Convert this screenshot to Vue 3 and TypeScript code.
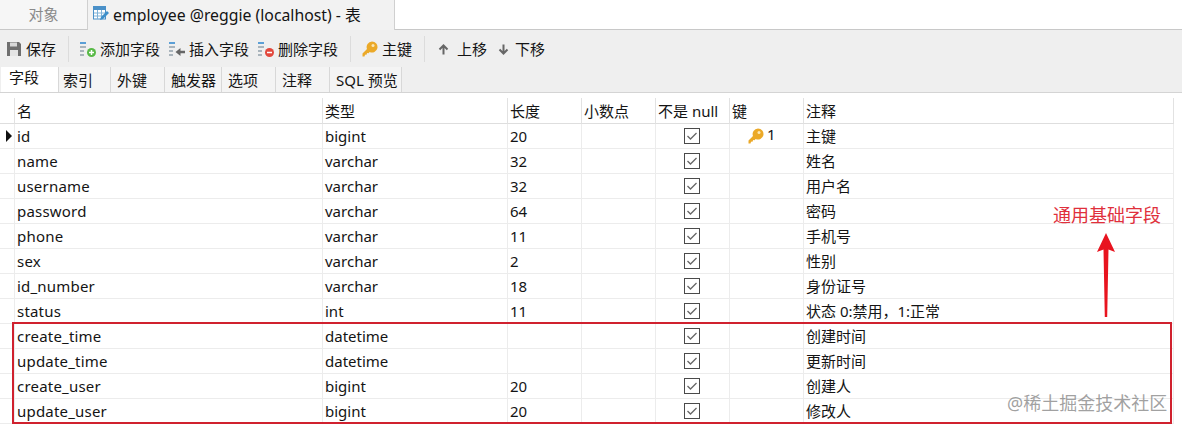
<script setup lang="ts">
interface Row { name: string; type: string; len: string; key?: string; note: string; first?: boolean }
const rows: Row[] = [
  { name: 'id', type: 'bigint', len: '20', key: '1', note: '主键', first: true },
  { name: 'name', type: 'varchar', len: '32', note: '姓名' },
  { name: 'username', type: 'varchar', len: '32', note: '用户名' },
  { name: 'password', type: 'varchar', len: '64', note: '密码' },
  { name: 'phone', type: 'varchar', len: '11', note: '手机号' },
  { name: 'sex', type: 'varchar', len: '2', note: '性别' },
  { name: 'id_number', type: 'varchar', len: '18', note: '身份证号' },
  { name: 'status', type: 'int', len: '11', note: '状态 0:禁用，1:正常' },
  { name: 'create_time', type: 'datetime', len: '', note: '创建时间' },
  { name: 'update_time', type: 'datetime', len: '', note: '更新时间' },
  { name: 'create_user', type: 'bigint', len: '20', note: '创建人' },
  { name: 'update_user', type: 'bigint', len: '20', note: '修改人' },
]
const subTabs = [
  { label: '字段', w: 58, pad: 8 }, { label: '索引', w: 52, pad: 4 }, { label: '外键', w: 54, pad: 6 },
  { label: '触发器', w: 57, pad: 6 }, { label: '选项', w: 54, pad: 6 }, { label: '注释', w: 54, pad: 6 },
  { label: 'SQL 预览', w: 72, pad: 6 },
]
const headers = ['名', '类型', '长度', '小数点', '不是 null', '键', '注释']
</script>

<template>
  <div class="page">
    <div class="tabbar">
      <div class="tab-object">对象</div>
      <div class="tab-active">
        <svg class="tab-icon" width="18" height="18" viewBox="0 0 18 18">
          <rect x="1" y="1" width="13" height="3.5" fill="#4a90c8" />
          <rect x="1.5" y="4.5" width="12" height="9.5" fill="#fff" stroke="#4a90c8" />
          <path d="M5.5 5v9M9.5 5v9M2 8h11M2 11h11" stroke="#7fb2d8" stroke-width="1" />
          <path d="M8 15l1-3 6-6 2 2-6 6z" fill="#3d8ec9" />
        </svg>
        <span>employee @reggie (localhost) - 表</span>
      </div>
      <div class="tab-rest"></div>
    </div>

    <div class="toolbar">
      <button class="tool tool-save">
        <svg width="16" height="16" viewBox="0 0 16 16">
          <path d="M1 1h12l2 2v12H1z" fill="#6f6f6f" />
          <rect x="4" y="1.5" width="7" height="4" fill="#d8d8d8" />
          <rect x="4" y="9" width="8" height="6" fill="#e4e4e4" />
        </svg>
        <span>保存</span>
      </button>
      <i class="sep sep-1"></i>
      <button class="tool tool-add">
        <svg width="17" height="17" viewBox="0 0 17 17">
          <path d="M0 2h6" stroke="#5b9fd6" stroke-width="2" />
          <path d="M0 6h6M0 10h4M0 14h4" stroke="#a9b4bc" stroke-width="2" />
          <circle cx="11.500" cy="11.500" r="4.500" fill="#58b947" />
          <path d="M9 11.500h5M11.500 9v5" stroke="#fff" stroke-width="1.500" />
        </svg>
        <span>添加字段</span>
      </button>
      <button class="tool tool-insert">
        <svg width="17" height="17" viewBox="0 0 17 17">
          <path d="M0 2h6" stroke="#5b9fd6" stroke-width="2" />
          <path d="M0 6h6M0 10h4M0 14h4" stroke="#a9b4bc" stroke-width="2" />
          <path d="M16 11h-6" stroke="#666" stroke-width="2.500" />
          <path d="M11.500 7l-5 4 5 4z" fill="#666" />
        </svg>
        <span>插入字段</span>
      </button>
      <button class="tool tool-delete">
        <svg width="17" height="17" viewBox="0 0 17 17">
          <path d="M0 2h6" stroke="#5b9fd6" stroke-width="2" />
          <path d="M0 6h6M0 10h4M0 14h4" stroke="#a9b4bc" stroke-width="2" />
          <circle cx="11.500" cy="11.500" r="4.500" fill="#e2483d" />
          <path d="M9 11.500h5" stroke="#fff" stroke-width="1.500" />
        </svg>
        <span>删除字段</span>
      </button>
      <i class="sep sep-2"></i>
      <button class="tool tool-key">
        <svg width="16" height="16" viewBox="0 0 16 16">
          <path d="M10 .5a5.500 5.500 0 1 1-2.300 10.500L6.500 12.200 5 12l-.2 1.500L3 13.800 2.500 15.500H.5v-3L5 8a5.500 5.500 0 0 1 5-7.500z" fill="#eba928" />
          <circle cx="11" cy="4.500" r="1.500" fill="#fbe7b5" />
        </svg>
        <span>主键</span>
      </button>
      <i class="sep sep-3"></i>
      <button class="tool tool-up">
        <svg width="11" height="11" viewBox="0 0 11 11">
          <path d="M5.500 10.500V3M1.500 5.500l4-4 4 4" fill="none" stroke="#666" stroke-width="2" />
        </svg>
        <span>上移</span>
      </button>
      <button class="tool tool-down">
        <svg width="11" height="11" viewBox="0 0 11 11">
          <path d="M5.500 .5V8M1.500 5.500l4 4 4-4" fill="none" stroke="#666" stroke-width="2" />
        </svg>
        <span>下移</span>
      </button>
    </div>

    <div class="subtabs">
      <div
        v-for="(t, i) in subTabs"
        :key="t.label"
        class="subtab"
        :class="{ on: i === 0 }"
        :style="{ width: t.w + 'px', paddingLeft: t.pad + 'px' }"
      >{{ t.label }}</div>
    </div>

    <div class="grid-wrap">
      <div class="row head">
        <div class="cell mark"></div>
        <div v-for="h in headers" :key="h" class="cell">{{ h }}</div>
      </div>
      <div v-for="r in rows" :key="r.name" class="row">
        <div class="cell mark"><i v-if="r.first" class="pointer"></i></div>
        <div class="cell field">{{ r.name }}</div>
        <div class="cell">{{ r.type }}</div>
        <div class="cell">{{ r.len }}</div>
        <div class="cell"></div>
        <div class="cell center">
          <svg width="16" height="16" viewBox="0 0 16 16">
            <rect x=".5" y=".5" width="15" height="15" fill="#fff" stroke="#4a4a4a" />
            <path d="M3.500 8l3 3 6-6" fill="none" stroke="#666" stroke-width="1.300" />
          </svg>
        </div>
        <div class="cell keycell">
          <template v-if="r.key">
            <svg width="16" height="16" viewBox="0 0 16 16">
              <path d="M10 .5a5.500 5.500 0 1 1-2.300 10.500L6.500 12.200 5 12l-.2 1.500L3 13.800 2.500 15.500H.5v-3L5 8a5.500 5.500 0 0 1 5-7.500z" fill="#eba928" />
              <circle cx="11" cy="4.500" r="1.500" fill="#fbe7b5" />
            </svg>
            <span class="keynum">{{ r.key }}</span>
          </template>
        </div>
        <div class="cell">{{ r.note }}</div>
      </div>

      <div class="redbox"></div>
    </div>

    <div class="annotation">通用基础字段</div>
    <svg class="arrow" width="20" height="86" viewBox="0 0 20 86">
      <path d="M10 0L19 19 12.500 16.500 11.200 84 8.800 84 7.500 16.500 1 19z" fill="#e8141f" />
    </svg>
    <div class="watermark">@稀土掘金技术社区</div>
  </div>
</template>

<style scoped>
.page {
  position: relative;
  width: 1182px;
  height: 428px;
  overflow: hidden;
  background: #fff;
  color: #141414;
  font: 15px/20px "Noto Sans", "Noto Sans CJK SC", sans-serif;
}
.tabbar {
  display: flex;
  height: 30px;
}
.tab-object {
  width: 88px;
  height: 30px;
  text-align: center;
  line-height: 29px;
  color: #8a8a8a;
  background: #f6f6f6;
  border-right: 1px solid #d0d0d0;
  border-bottom: 1px solid #c8c8c8;
  box-sizing: border-box;
}
.tab-active {
  width: 307px;
  height: 30px;
  display: flex;
  align-items: center;
  gap: 3px;
  padding-left: 2px;
  box-sizing: border-box;
  font-size: 15.8px;
  background: #f2f2f2;
  border-right: 1px solid #d0d0d0;
}
.tab-rest {
  flex: 1;
  height: 30px;
  box-sizing: border-box;
  border-bottom: 1px solid #c8c8c8;
}
.tab-icon { margin-top: -2px; margin-left: 2px; }
.toolbar {
  position: relative;
  display: flex;
  align-items: center;
  box-sizing: border-box;
  height: 37px;
  padding-top: 1px;
  background: #efefef;
}
.tool {
  display: flex;
  align-items: center;
  padding: 0;
  border: 0;
  background: none;
  font: inherit;
  color: inherit;
  white-space: nowrap;
}
.tool span { display: block; }
.tool-save { margin-left: 6px; gap: 4px; }
.tool-add { margin-left: 11px; gap: 3px; }
.tool-insert { margin-left: 9px; gap: 3px; }
.tool-delete { margin-left: 9px; gap: 3px; }
.tool-key { margin-left: 11px; gap: 4px; }
.tool-up { margin-left: 13px; gap: 8px; }
.tool-down { margin-left: 11px; gap: 6px; }
.sep {
  display: block;
  width: 1px;
  height: 26px;
  background: #dcdcdc;
}
.sep-1 { margin-left: 12px; }
.sep-2 { margin-left: 12px; }
.sep-3 { margin-left: 12px; }
.subtabs {
  display: flex;
  box-sizing: border-box;
  height: 26px;
  padding-left: 1px;
  background: #efefef;
  border-bottom: 1px solid #d4d4d4;
}
.subtab {
  box-sizing: border-box;
  height: 25px;
  line-height: 26px;
  background: #f4f4f4;
  border-right: 1px solid #d8d8d8;
}
.subtab.on {
  height: 27px;
  margin-top: -2px;
  line-height: 25px;
  background: #fff;
}
.grid-wrap {
  position: relative;
  padding-top: 5px;
}
.row {
  display: grid;
  grid-template-columns: 15px 308px 185px 74px 74px 74px 74px 370px;
  height: 25px;
  width: 1174px;
}
.cell {
  box-sizing: border-box;
  height: 25px;
  padding: 1px 0 0 2px;
  line-height: 22px;
  border-right: 1px solid #ececec;
  border-bottom: 1px solid #ececec;
  white-space: nowrap;
}
.field { letter-spacing: 0.2px; }
.row.head { height: 26px; }
.head .cell { height: 26px; padding-top: 2px; border-bottom-color: #dedede; border-right-color: #e2e2e2; }
.mark { position: relative; padding: 0; }
.pointer {
  position: absolute;
  left: 6px;
  top: 6px;
  border-left: 6px solid #111;
  border-top: 6px solid transparent;
  border-bottom: 6px solid transparent;
}
.center {
  display: flex;
  align-items: center;
  justify-content: center;
  padding: 0 1px 0 0;
}
.keycell {
  display: flex;
  align-items: center;
  padding: 0 0 0 18px;
}
.keynum { margin: -4px 0 0 3px; }
.redbox {
  position: absolute;
  left: 12px;
  top: 229px;
  width: 1156px;
  height: 98px;
  border: 2px solid #d0212e;
  pointer-events: none;
}
.annotation {
  position: absolute;
  left: 1053px;
  top: 203px;
  font-size: 18px;
  line-height: 24px;
  color: #e0303c;
  white-space: nowrap;
}
.arrow {
  position: absolute;
  left: 1096px;
  top: 233px;
}
.watermark {
  position: absolute;
  left: 1007px;
  top: 391px;
  font-size: 18px;
  line-height: 24px;
  color: rgba(130, 130, 130, 0.75);
  white-space: nowrap;
}
</style>
